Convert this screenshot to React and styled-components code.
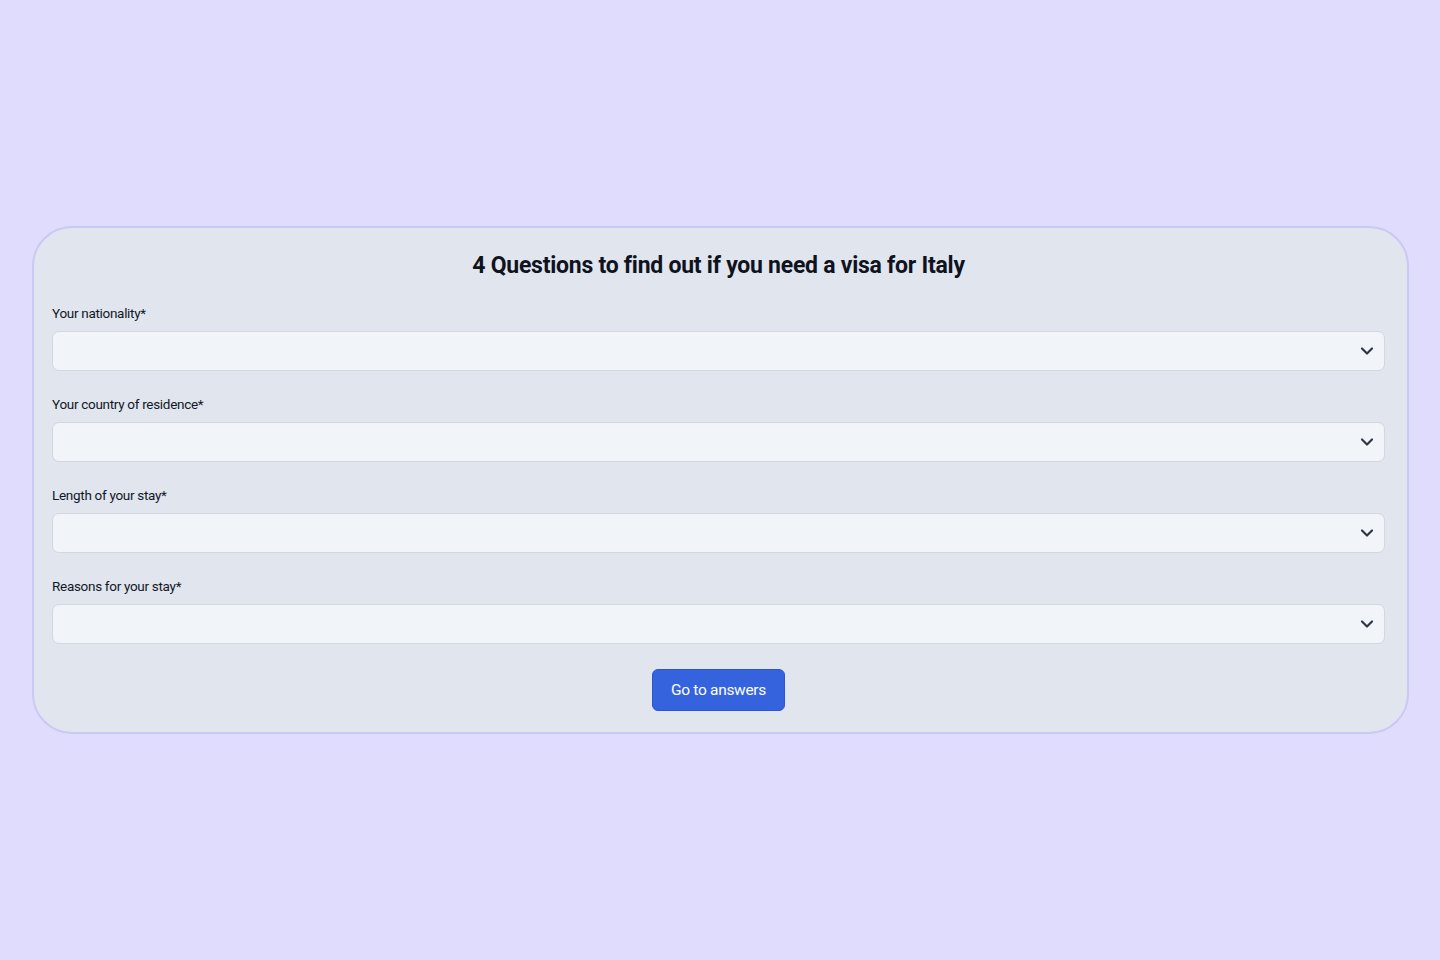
import React from 'react'
import styled, { createGlobalStyle } from 'styled-components'
import { ChevronDown } from 'lucide-react'

const GlobalStyle = createGlobalStyle`
  html, body {
    margin: 0;
    padding: 0;
    background: #e0dcfd;
  }
  body {
    font-family: "Roboto", "Liberation Sans", sans-serif;
    color: #111827;
  }
`

const Page = styled.main`
  min-height: 960px;
  display: flex;
  align-items: center;
  justify-content: center;
  padding: 0 31px 0 32px;
  box-sizing: border-box;
`

const Card = styled.form`
  flex: 1;
  background: #e1e5ee;
  border: 2px solid #c9c9f6;
  border-radius: 40px;
  padding: 24px 22px 21px 18px;
  display: flex;
  flex-direction: column;
  align-items: stretch;
`

const Title = styled.h1`
  margin: 0 0 23px;
  text-align: center;
  font-size: 23px;
  line-height: 28px;
  font-weight: 700;
  letter-spacing: -0.25px;
  color: #0f1320;
`

const Fields = styled.div`
  display: flex;
  flex-direction: column;
  gap: 23px;
`

const Field = styled.label`
  display: flex;
  flex-direction: column;
  gap: 8px;
`

const LabelText = styled.span`
  font-size: 13.5px;
  line-height: 20px;
  letter-spacing: -0.3px;
  color: #111827;
`

const SelectWrap = styled.div`
  position: relative;
  height: 40px;
`

const Select = styled.select`
  appearance: none;
  width: 100%;
  height: 100%;
  box-sizing: border-box;
  background: #f1f4f9;
  border: 1px solid #d3d7df;
  border-radius: 7px;
  padding: 0 40px 0 12px;
  font: inherit;
  font-size: 15px;
  color: #111827;
  outline: none;
`

const Chevron = styled(ChevronDown)`
  position: absolute;
  right: 8px;
  top: 10px;
  pointer-events: none;
  color: #2f3747;
`

const Actions = styled.div`
  display: flex;
  justify-content: center;
  margin-top: 25px;
`

const Button = styled.button`
  width: 133px;
  height: 42px;
  border: 1px solid #2c55cf;
  border-radius: 6px;
  background: #3563de;
  color: #ffffff;
  font: inherit;
  font-size: 15.5px;
  letter-spacing: -0.3px;
  cursor: pointer;
`

const questions = [
  'Your nationality*',
  'Your country of residence*',
  'Length of your stay*',
  'Reasons for your stay*',
]

const App = () => (
  <>
    <GlobalStyle />
    <Page>
      <Card onSubmit={(e) => e.preventDefault()}>
        <Title>4 Questions to find out if you need a visa for Italy</Title>
        <Fields>
          {questions.map((q) => (
            <Field key={q}>
              <LabelText>{q}</LabelText>
              <SelectWrap>
                <Select defaultValue="">
                  <option value="" />
                </Select>
                <Chevron size={20} strokeWidth={2.6} />
              </SelectWrap>
            </Field>
          ))}
        </Fields>
        <Actions>
          <Button type="submit">Go to answers</Button>
        </Actions>
      </Card>
    </Page>
  </>
)

export default App
